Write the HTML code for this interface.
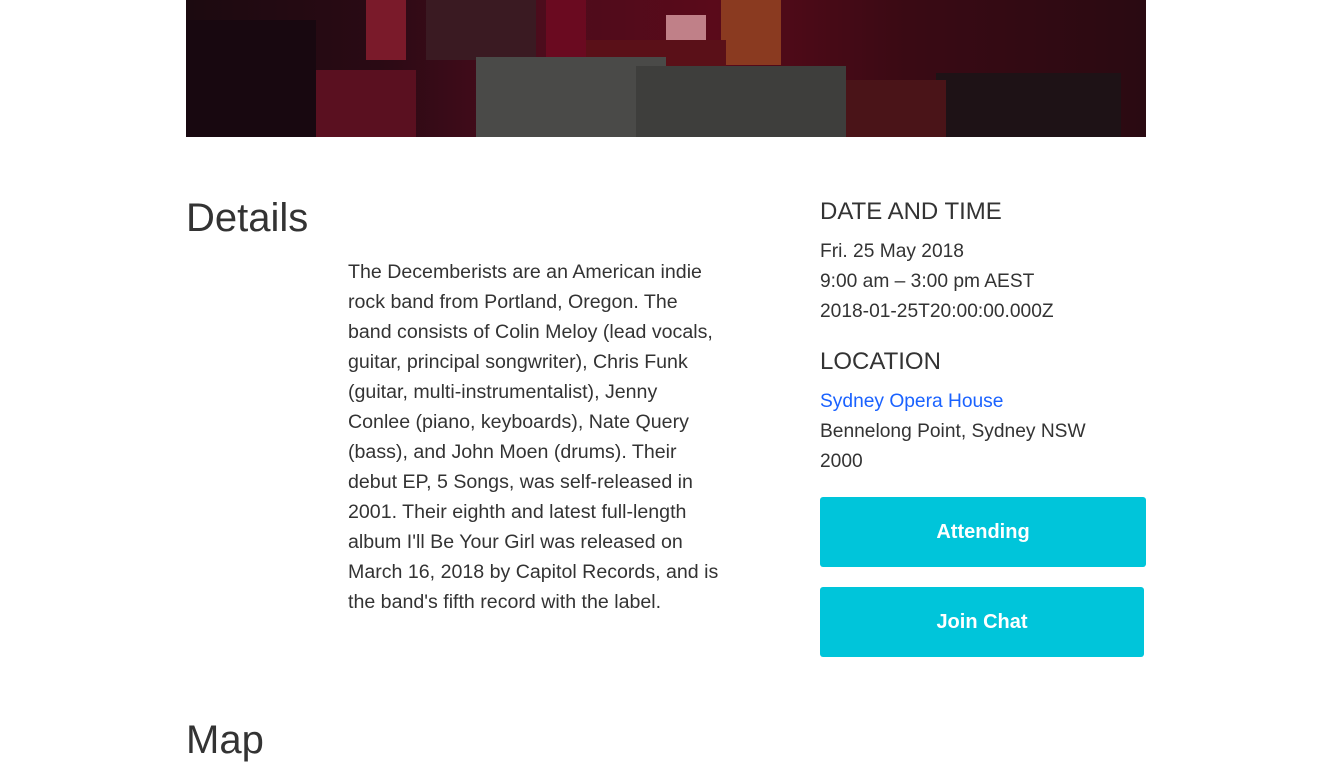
<!DOCTYPE html>
<html><head><meta charset="utf-8"><style>
body{margin:0;background:#fff;font-family:"Liberation Sans",Arial,sans-serif;color:#333;width:1336px;height:760px;overflow:hidden;position:relative}
.img{position:absolute;left:186px;top:0;width:960px;height:137px;background:#1a0508;overflow:hidden}
.img div{position:absolute}
h2{position:absolute;margin:0;font-weight:400;font-size:40px;color:#333}
.txt{position:absolute;left:348px;top:257px;font-size:19.6px;line-height:30px;color:#333;white-space:nowrap}
.h3{position:absolute;left:820px;font-size:24px;color:#333}
.info{position:absolute;left:820px;font-size:19.2px;line-height:30px;color:#333;white-space:nowrap}
.btn{position:absolute;left:820px;background:#00c5da;border-radius:3px;color:#fff;font-size:20px;font-weight:bold;text-align:center;line-height:70px;height:70px}
</style></head><body>
<div class="img">
 <div style="left:0;top:0;width:960px;height:137px;background:linear-gradient(90deg,#1c0a10 0%,#2a0a14 20%,#4a0c1c 35%,#5a0a1a 55%,#3a0a14 75%,#2a0a12 100%)"></div>
 <div style="left:120px;top:70px;width:110px;height:67px;background:#5a1020"></div>
 <div style="left:180px;top:0;width:40px;height:60px;background:#7a1a2a"></div>
 <div style="left:240px;top:0;width:110px;height:60px;background:#3a1a22"></div>
 <div style="left:360px;top:0;width:40px;height:60px;background:#6a0a20"></div>
 <div style="left:480px;top:15px;width:40px;height:45px;background:#c08088"></div>
 <div style="left:535px;top:0;width:60px;height:65px;background:#8a3a20"></div>
 <div style="left:400px;top:40px;width:140px;height:80px;background:#5a1018"></div>
 <div style="left:290px;top:57px;width:190px;height:80px;background:#4a4a48"></div>
 <div style="left:450px;top:66px;width:210px;height:71px;background:#3e3e3c"></div>
 <div style="left:750px;top:73px;width:185px;height:64px;background:#1e1216"></div>
 <div style="left:660px;top:80px;width:100px;height:57px;background:#4a1418"></div>
 <div style="left:0;top:20px;width:130px;height:117px;background:#180810"></div>
</div>
<h2 style="left:186px;top:196px">Details</h2>
<div class="txt">The Decemberists are an American indie<br>rock band from Portland, Oregon. The<br>band consists of Colin Meloy (lead vocals,<br>guitar, principal songwriter), Chris Funk<br>(guitar, multi-instrumentalist), Jenny<br>Conlee (piano, keyboards), Nate Query<br>(bass), and John Moen (drums). Their<br>debut EP, 5 Songs, was self-released in<br>2001. Their eighth and latest full-length<br>album I'll Be Your Girl was released on<br>March 16, 2018 by Capitol Records, and is<br>the band's fifth record with the label.</div>
<div class="h3" style="top:198px">DATE AND TIME</div>
<div class="info" style="top:237px">Fri. 25 May 2018<br>9:00 am – 3:00 pm AEST<br>2018-01-25T20:00:00.000Z</div>
<div class="h3" style="top:348px">LOCATION</div>
<div class="info" style="top:387px"><span style="color:#1a62ff">Sydney Opera House</span><br>Bennelong Point, Sydney NSW<br>2000</div>
<div class="btn" style="top:497px;width:326px">Attending</div>
<div class="btn" style="top:587px;width:324px">Join Chat</div>
<h2 style="left:186px;top:718px">Map</h2>
</body></html>
